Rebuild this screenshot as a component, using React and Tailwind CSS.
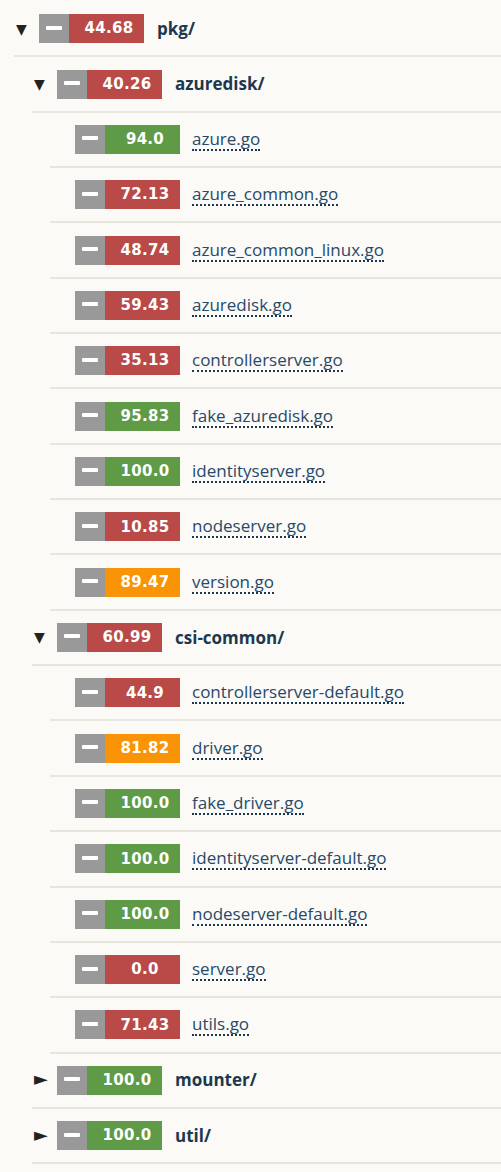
import React from "react"

const TREE = [
  {
    name: "pkg/",
    cov: "44.68",
    open: true,
    children: [
      {
        name: "azuredisk/",
        cov: "40.26",
        open: true,
        children: [
          { name: "azure.go", cov: "94.0" },
          { name: "azure_common.go", cov: "72.13" },
          { name: "azure_common_linux.go", cov: "48.74" },
          { name: "azuredisk.go", cov: "59.43" },
          { name: "controllerserver.go", cov: "35.13" },
          { name: "fake_azuredisk.go", cov: "95.83" },
          { name: "identityserver.go", cov: "100.0" },
          { name: "nodeserver.go", cov: "10.85" },
          { name: "version.go", cov: "89.47" },
        ],
      },
      {
        name: "csi-common/",
        cov: "60.99",
        open: true,
        children: [
          { name: "controllerserver-default.go", cov: "44.9" },
          { name: "driver.go", cov: "81.82" },
          { name: "fake_driver.go", cov: "100.0" },
          { name: "identityserver-default.go", cov: "100.0" },
          { name: "nodeserver-default.go", cov: "100.0" },
          { name: "server.go", cov: "0.0" },
          { name: "utils.go", cov: "71.43" },
        ],
      },
      { name: "mounter/", cov: "100.0", open: false, children: [] },
      { name: "util/", cov: "100.0", open: false, children: [] },
    ],
  },
]

function covColor(v) {
  const n = parseFloat(v)
  if (n >= 90) return "bg-[#5f9a46]"
  if (n >= 75) return "bg-[#f89406]"
  return "bg-[#b94a48]"
}

function Badge({ cov }) {
  return (
    <div className="flex h-[29px] shrink-0">
      <div className="flex w-[30px] items-center justify-center bg-[#999999]">
        <div className="mb-[2px] h-[4px] w-[16px] rounded-[1px] bg-white" />
      </div>
      <div
        className={
          "flex w-[75px] items-center justify-center pl-[5px] font-['DejaVu_Sans',sans-serif] text-[15px] font-bold tracking-[0.3px] text-white " +
          covColor(cov)
        }
      >
        {cov}
      </div>
    </div>
  )
}

function Node({ node }) {
  const isDir = !!node.children
  return (
    <li>
      <div className="flex h-[55.35px] items-center border-b-2 border-[#e8e5de]">
        <div className="w-[25px] shrink-0 pl-[2px] text-[#222] font-['DejaVu_Sans',sans-serif]">
          {isDir && (node.open ? (
            <span className="text-[14px] leading-none">▼</span>
          ) : (
            <span className="text-[18px] leading-none">►</span>
          ))}
        </div>
        <Badge cov={node.cov} />
        {isDir ? (
          <span className="ml-[13px] text-[17px] font-bold text-[#1c3850]">
            {node.name}
          </span>
        ) : (
          <span className="ml-[12px] border-b-2 border-dotted border-[#1c3850] text-[17px] leading-[21px] text-[#27496a]">
            {node.name}
          </span>
        )}
      </div>
      {isDir && node.open && node.children.length > 0 && (
        <ul className="pl-[18px]">
          {node.children.map((c) => (
            <Node key={c.name} node={c} />
          ))}
        </ul>
      )}
    </li>
  )
}

export default function App() {
  return (
    <div className="min-h-screen bg-[#fbfaf6] pt-[2px] font-['Open_Sans',sans-serif]">
      <ul className="pl-[14px]">
        {TREE.map((n) => (
          <Node key={n.name} node={n} />
        ))}
      </ul>
    </div>
  )
}
